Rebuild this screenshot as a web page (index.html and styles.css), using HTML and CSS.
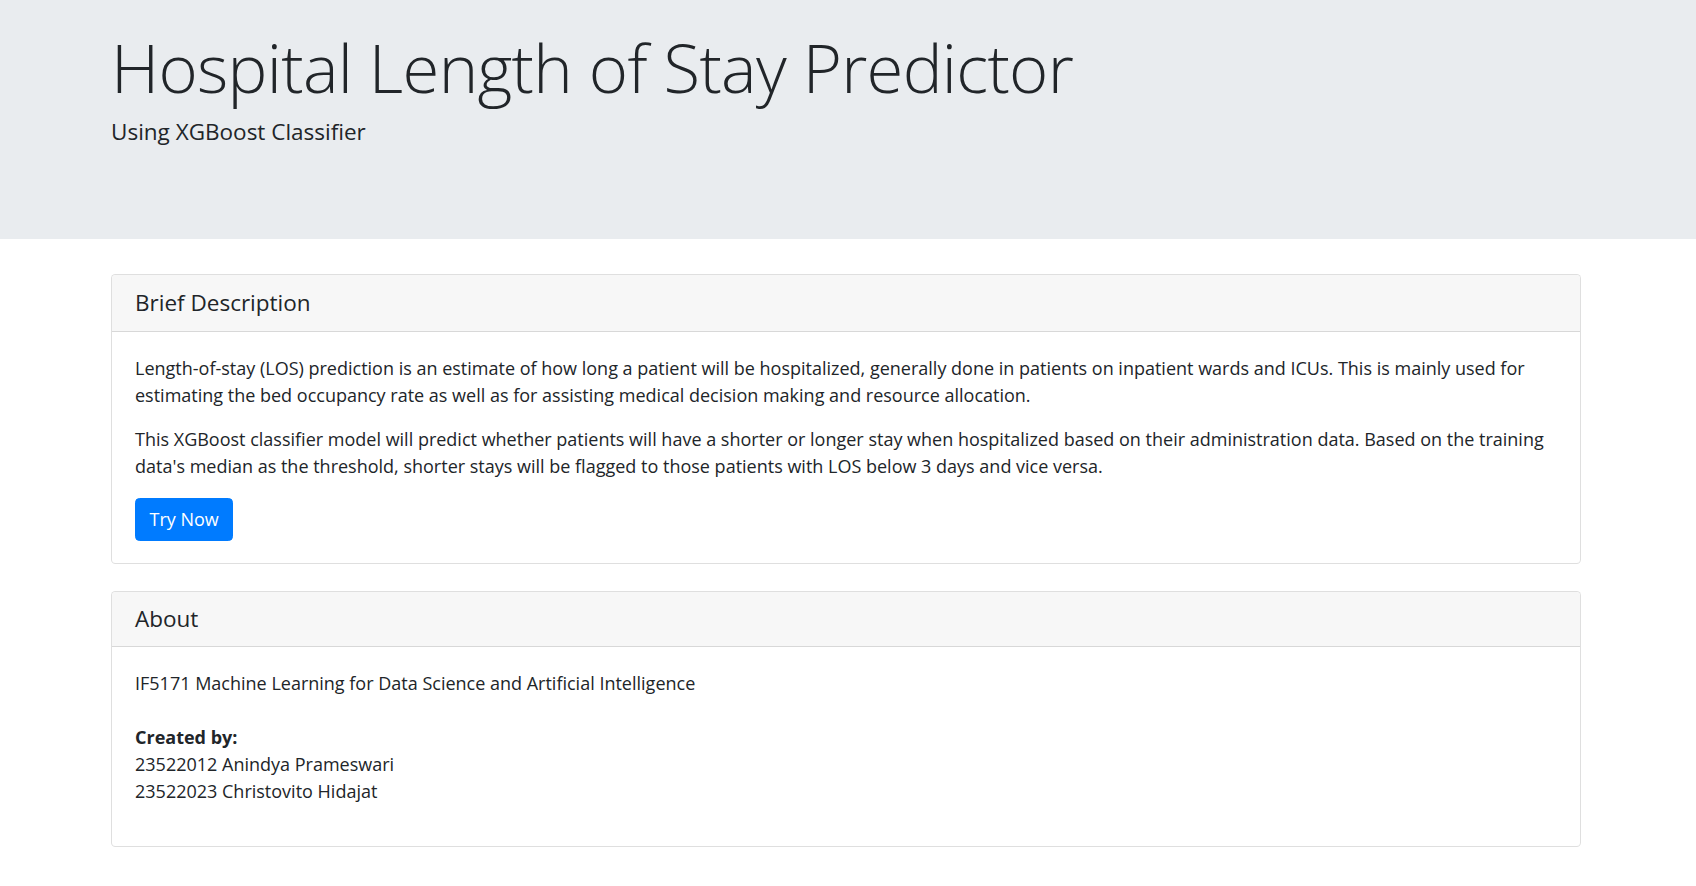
FILE: index.html
```html
<!DOCTYPE html>
<html lang="en">
<head>
<meta charset="utf-8">
<title>Hospital Length of Stay Predictor</title>
<link rel="stylesheet" href="styles.css">
</head>
<body>
<header class="jumbotron">
  <div class="container">
    <h1 class="display">Hospital Length of Stay Predictor</h1>
    <p class="lead">Using XGBoost Classifier</p>
  </div>
</header>
<main class="container">
  <section class="card">
    <div class="card-header">Brief Description</div>
    <div class="card-body">
      <p>Length-of-stay (LOS) prediction is an estimate of how long a patient will be hospitalized, generally done in patients on inpatient wards and ICUs. This is mainly used for estimating the bed occupancy rate as well as for assisting medical decision making and resource allocation.</p>
      <p class="last">This XGBoost classifier model will predict whether patients will have a shorter or longer stay when hospitalized based on their administration data. Based on the training data's median as the threshold, shorter stays will be flagged to those patients with LOS below 3 days and vice versa.</p>
      <a class="btn" href="#">Try Now</a>
    </div>
  </section>
  <section class="card card-spaced">
    <div class="card-header">About</div>
    <div class="card-body">
      <p class="course">IF5171 Machine Learning for Data Science and Artificial Intelligence</p>
      <p class="authors"><strong>Created by:</strong><br>23522012 Anindya Prameswari<br>23522023 Christovito Hidajat</p>
    </div>
  </section>
</main>
</body>
</html>
```
FILE: styles.css
```css
* { box-sizing: border-box; }
html, body { margin: 0; padding: 0; }
body {
  font-family: "Open Sans", "Liberation Sans", sans-serif;
  font-size: 18px;
  line-height: 1.5;
  color: #212529;
  background: #fff;
}
.container {
  margin-left: 111px;
  margin-right: 115px;
}
.jumbotron {
  background: #e9ecef;
  padding: 27px 0 72px;
  margin: 0 0 35px;
}
.display {
  font-size: 67px;
  font-weight: 300;
  letter-spacing: -0.7px;
  line-height: 1.2;
  margin: 0 0 8px;
}
.lead {
  font-size: 22.5px;
  font-weight: 400;
  margin: 0 0 18px;
}
.card {
  border: 1px solid rgba(0,0,0,.125);
  border-radius: 4.5px;
  background: #fff;
  overflow: hidden;
}
.card-spaced { margin-top: 27px; }
.card-header {
  background: #f7f7f7;
  border-bottom: 1px solid rgba(0,0,0,.125);
  padding: 13px 23px;
  font-size: 22.5px;
  line-height: 30px;
}
.card-spaced .card-header { padding: 12px 23px; }
.card-body { padding: 22.5px 23px; }
.card-body p { margin: 0 0 17px; }
.card-body p.last { margin-bottom: 18px; }
.card-body p.course { margin-bottom: 27px; }
.card-body p.authors { margin-bottom: 19px; }
.card-body strong { font-weight: 700; }
.btn {
  display: inline-block;
  vertical-align: top;
  background: #007bff;
  color: #fff;
  text-decoration: none;
  border: 1px solid #007bff;
  border-radius: 4.5px;
  padding: 7px 13.5px;
  font-size: 18px;
  line-height: 27px;
}
```
